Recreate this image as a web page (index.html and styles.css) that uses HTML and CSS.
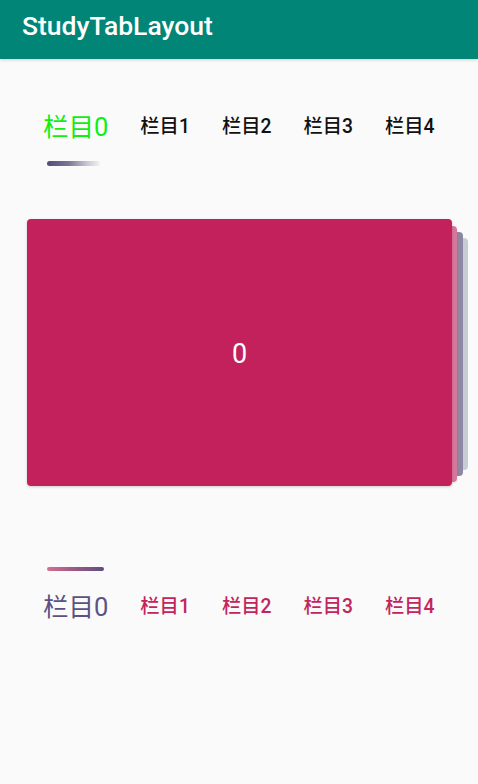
FILE: index.html
```html
<!DOCTYPE html>
<html lang="zh">
<head>
<meta charset="utf-8">
<title>StudyTabLayout</title>
<link rel="stylesheet" href="styles.css">
</head>
<body>
<header class="appbar">
  <h1 class="title">StudyTabLayout</h1>
</header>
<main class="content">
  <nav class="tabs tabs-top">
    <span class="tab selected">栏目0</span>
    <span class="tab">栏目1</span>
    <span class="tab">栏目2</span>
    <span class="tab">栏目3</span>
    <span class="tab">栏目4</span>
  </nav>
  <div class="indicator indicator-top"></div>
  <section class="stack">
    <div class="back back3"></div>
    <div class="back back2"></div>
    <div class="back back1"></div>
    <div class="card"><span class="card-num">0</span></div>
  </section>
  <div class="indicator indicator-bottom"></div>
  <nav class="tabs tabs-bottom">
    <span class="tab selected">栏目0</span>
    <span class="tab">栏目1</span>
    <span class="tab">栏目2</span>
    <span class="tab">栏目3</span>
    <span class="tab">栏目4</span>
  </nav>
</main>
</body>
</html>
```
FILE: styles.css
```css
html, body {
  margin: 0;
  padding: 0;
}
body {
  width: 478px;
  height: 784px;
  background: #fafafa;
  font-family: Roboto, "Noto Sans CJK SC", sans-serif;
  overflow: hidden;
}
.appbar {
  height: 59px;
  background: #008577;
  box-shadow: 0 1px 3px rgba(0,0,0,0.18);
  display: flex;
  align-items: center;
  padding-left: 22px;
  position: relative;
  z-index: 2;
}
.title {
  margin: 0;
  color: #ffffff;
  font-size: 26.5px;
  font-weight: 500;
  line-height: 1;
  margin-top: -6px;
}
.content {
  display: flex;
  flex-direction: column;
}
.tabs {
  display: flex;
  align-items: center;
  height: 40px;
  padding-left: 27px;
}
.tab {
  padding: 0 16px;
  font-size: 19.3px;
  font-weight: 500;
  line-height: 40px;
  color: #111111;
  white-space: nowrap;
}
.tab.selected {
  font-size: 25.5px;
  font-weight: 400;
}
.tabs-top {
  margin-top: 48px;
}
.tabs-top .tab.selected {
  color: #11ee11;
}
.tabs-bottom {
  margin-top: 16px;
}
.tabs-bottom .tab {
  color: #c2255c;
}
.tabs-bottom .tab.selected {
  color: #5b5283;
}
.indicator {
  height: 5px;
  border-radius: 3px;
  margin-left: 47px;
}
.indicator-top {
  width: 53px;
  margin-top: 14px;
  background: linear-gradient(to right, #554c73 0%, #7a7394 40%, #c9c6d3 75%, #f2f2f2 100%);
}
.indicator-bottom {
  width: 57px;
  height: 4px;
  margin-top: 81px;
  background: linear-gradient(to right, #d4708f 0%, #a05a86 45%, #5b4f82 100%);
}
.stack {
  position: relative;
  margin-top: 53px;
  margin-left: 27px;
  width: 425px;
  height: 267px;
}
.card {
  position: relative;
  z-index: 4;
  height: 100%;
  background: #c2215b;
  border-radius: 4px;
  box-shadow: 0 1px 3px rgba(0,0,0,0.18);
  display: flex;
  align-items: center;
  justify-content: center;
}
.card-num {
  color: #ffffff;
  font-size: 27px;
  line-height: 1;
  margin-top: 4px;
}
.back {
  position: absolute;
  border-radius: 4px;
}
.back1 {
  z-index: 3;
  left: 20px;
  right: -5px;
  top: 7px;
  bottom: 4px;
  background: #d9769b;
  box-shadow: 0 1px 2px rgba(0,0,0,0.12);
}
.back2 {
  z-index: 2;
  left: 40px;
  right: -11px;
  top: 13px;
  bottom: 10px;
  background: #8c88a4;
}
.back3 {
  z-index: 1;
  left: 60px;
  right: -16px;
  top: 19px;
  bottom: 16px;
  background: #c6cdd4;
}
```
